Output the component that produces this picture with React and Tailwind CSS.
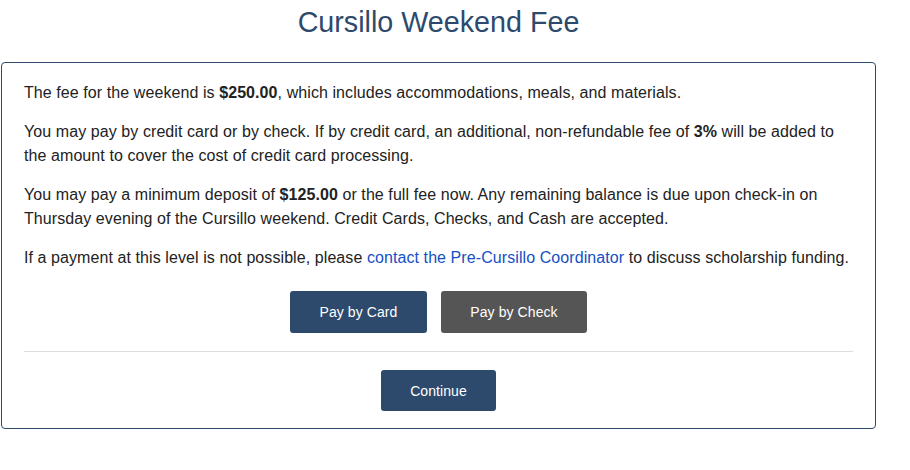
export default function App() {
  return (
    <div className="w-[910px] h-[470px] bg-white text-[#222] font-['Liberation_Sans',Arial,sans-serif]">
      <h1 className="w-[877px] pt-[5px] text-center text-[28.7px] leading-[34px] text-[#2d4a6d] mb-[23px]">
        Cursillo Weekend Fee
      </h1>
      <div className="ml-[1px] w-[875px] border border-[#2d4a6d] rounded-[4px] px-[22px] pt-[18px] pb-[17px] text-[16px] tracking-[0.08px] leading-[24px]">
        <p>
          The fee for the weekend is <b>$250.00</b>, which includes accommodations, meals, and materials.
        </p>
        <p className="mt-[15px]">
          You may pay by credit card or by check. If by credit card, an additional, non-refundable fee of <b>3%</b> will be added to the amount to cover the cost of credit card processing.
        </p>
        <p className="mt-[15px]">
          You may pay a minimum deposit of <b>$125.00</b> or the full fee now. Any remaining balance is due upon check-in on Thursday evening of the Cursillo weekend. Credit Cards, Checks, and Cash are accepted.
        </p>
        <p className="mt-[15px]">
          If a payment at this level is not possible, please{" "}
          <a className="text-[#1450c4]" href="#">contact the Pre-Cursillo Coordinator</a>{" "}
          to discuss scholarship funding.
        </p>
        <div className="mt-[21px] flex justify-center gap-[14px]">
          <button className="w-[137px] h-[42px] rounded-[3px] bg-[#2d4a6d] text-white text-[14px]">Pay by Card</button>
          <button className="w-[146px] h-[42px] rounded-[3px] bg-[#555555] text-white text-[14px]">Pay by Check</button>
        </div>
        <div className="mt-[18px] border-t border-[#dddddd]" />
        <div className="mt-[18px] flex justify-center">
          <button className="w-[115px] h-[41px] rounded-[3px] bg-[#2d4a6d] text-white text-[14px]">Continue</button>
        </div>
      </div>
    </div>
  );
}
